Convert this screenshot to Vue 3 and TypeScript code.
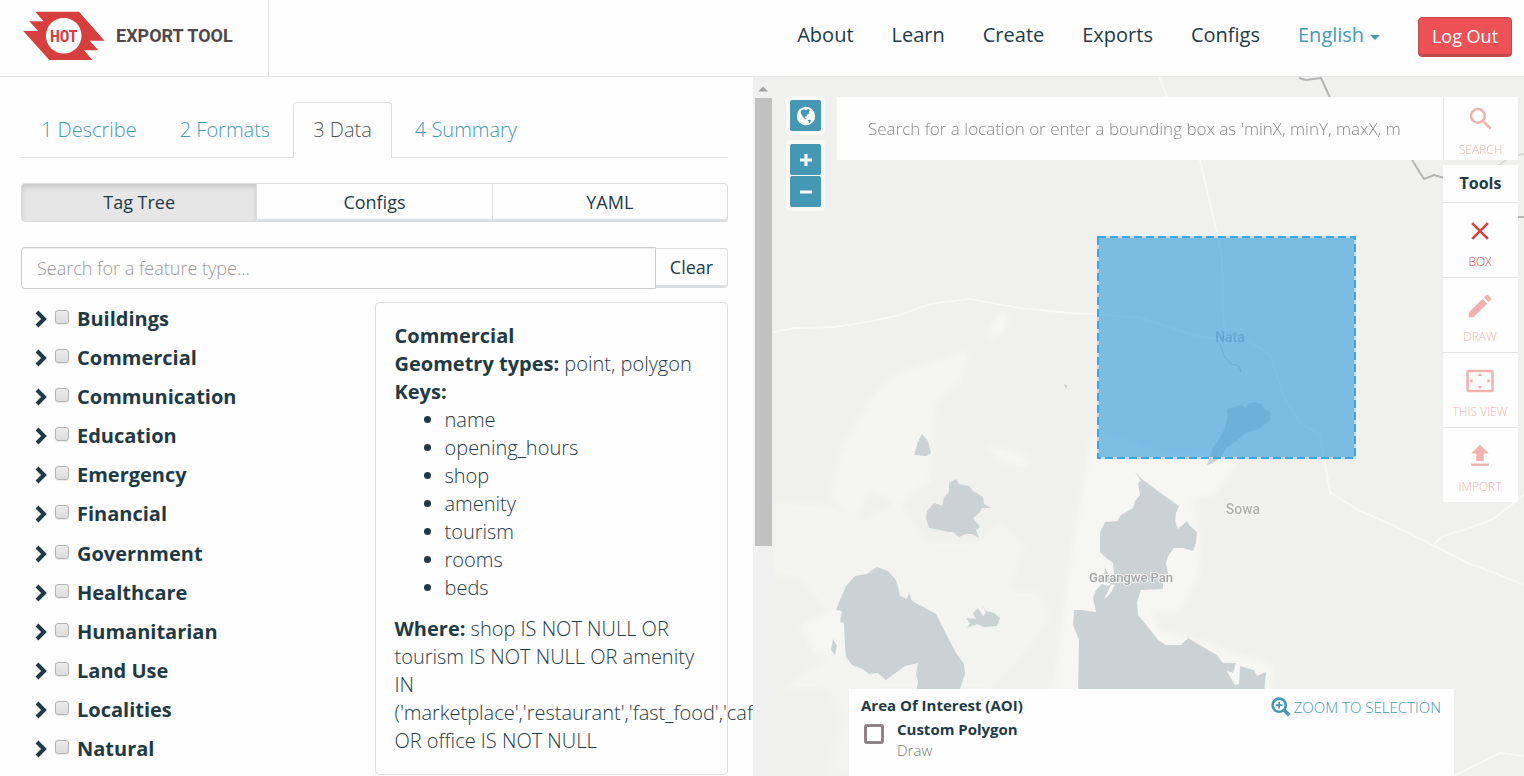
<script setup lang="ts">
import { ref } from 'vue'

const navLinks = ['About', 'Learn', 'Create', 'Exports', 'Configs']
const steps = ['1 Describe', '2 Formats', '3 Data', '4 Summary']
const activeStep = ref('3 Data')
const modes = ['Tag Tree', 'Configs', 'YAML']
const activeMode = ref('Tag Tree')
const featureQuery = ref('')
const locationQuery = ref('')

const categories = ref(
  [
    'Buildings', 'Commercial', 'Communication', 'Education', 'Emergency', 'Financial',
    'Government', 'Healthcare', 'Humanitarian', 'Land Use', 'Localities', 'Natural',
  ].map((name) => ({ name, checked: false })),
)
const keys = ['name', 'opening_hours', 'shop', 'amenity', 'tourism', 'rooms', 'beds']

interface Tool {
  label: string
  path: string
  active: boolean
}
const tools: Tool[] = [
  { label: 'BOX', active: true, path: 'M19 6.4 17.6 5 12 10.6 6.4 5 5 6.4 10.6 12 5 17.6 6.4 19 12 13.4 17.6 19 19 17.6 13.4 12z' },
  { label: 'DRAW', active: false, path: 'M3 17.25V21h3.75L17.81 9.94l-3.75-3.75L3 17.25zM20.71 7.04a1 1 0 0 0 0-1.41l-2.34-2.34a1 1 0 0 0-1.41 0l-1.83 1.83 3.75 3.75 1.83-1.83z' },
  { label: 'THIS VIEW', active: false, path: 'M12 5.5 10 8h4l-2-2.5zM18 10v4l2.5-2L18 10zM6 10l-2.5 2L6 14v-4zM14 16h-4l2 2.5 2-2.5zM21 3H3a2 2 0 0 0-2 2v14a2 2 0 0 0 2 2h18a2 2 0 0 0 2-2V5a2 2 0 0 0-2-2zm0 16H3V5h18v14z' },
  { label: 'IMPORT', active: false, path: 'M9 16h6v-6h4l-7-7-7 7h4v6zm-4 2h14v2H5v-2z' },
]
</script>

<template>
  <div class="page">
    <header class="header">
      <a class="brand" href="#">
        <svg class="logo" viewBox="23 11 82 50" aria-hidden="true">
          <path fill="#d73f3f" d="M35.3 11.7H79L104.5 40.7H89.7L98.3 50.3H84L92.3 60H49.3L23.3 31H38L29.3 21.3H43.5z" />
          <circle cx="63.7" cy="35.7" r="17.8" fill="#fff" />
          <text x="63.7" y="42" text-anchor="middle" class="logo-text">HOT</text>
        </svg>
        <span class="brand-name">EXPORT TOOL</span>
      </a>
      <nav class="nav">
        <a v-for="link in navLinks" :key="link" href="#">{{ link }}</a>
        <span class="language">
          <select aria-label="Language"><option>English</option></select>
          <i class="caret"></i>
        </span>
        <button class="logout" type="button">Log Out</button>
      </nav>
    </header>

    <main class="body">
      <section class="pane">
        <div class="content">
          <nav class="tabs">
            <a
              v-for="step in steps"
              :key="step"
              href="#"
              :class="{ active: step === activeStep }"
              @click.prevent="activeStep = step"
            >{{ step }}</a>
          </nav>

          <div class="modes">
            <button
              v-for="mode in modes"
              :key="mode"
              type="button"
              :class="{ active: mode === activeMode }"
              @click="activeMode = mode"
            >{{ mode }}</button>
          </div>

          <div class="feature-search">
            <input v-model="featureQuery" type="text" aria-label="Feature type" placeholder="Search for a feature type..." />
            <button type="button" @click="featureQuery = ''">Clear</button>
          </div>

          <div class="columns">
            <ul class="tree">
              <li v-for="category in categories" :key="category.name">
                <svg class="chevron" viewBox="0 0 12 18" aria-hidden="true">
                  <path d="M2 2 9 9 2 16" fill="none" stroke="#1e3a47" stroke-width="4" />
                </svg>
                <label>
                  <input v-model="category.checked" type="checkbox" />
                  <span>{{ category.name }}</span>
                </label>
              </li>
            </ul>
            <article class="card">
              <strong>Commercial</strong><br />
              <strong>Geometry types:</strong> point, polygon<br />
              <strong>Keys:</strong>
              <ul>
                <li v-for="key in keys" :key="key">{{ key }}</li>
              </ul>
              <strong>Where:</strong> shop IS NOT NULL OR tourism IS NOT NULL OR amenity IN
              ('marketplace','restaurant','fast_food','cafe') OR office IS NOT NULL
            </article>
          </div>
        </div>
        <div class="scrollbar" aria-hidden="true">
          <svg viewBox="0 0 20 21"><path d="M5 14.5 10 9.5 15 14.5z" fill="#a0a0a0" /></svg>
          <div class="thumb"></div>
        </div>
      </section>

      <section class="map">
        <svg class="canvas" viewBox="773 77 751 699" preserveAspectRatio="xMidYMid slice" role="img" aria-label="Map">
          <defs>
            <filter id="soften" x="-10%" y="-10%" width="120%" height="120%">
              <feGaussianBlur stdDeviation="3" />
            </filter>
          </defs>
          <rect x="773" y="77" width="751" height="699" fill="#f0f0ee" />
          <g fill="#f6f6f4" filter="url(#soften)">
            <path d="M1088 460 1090 440 1100 430 1170 455 1230 445 1238 462 1215 495 1192 500 1200 540 1198 575 1180 612 1150 610 1160 630 1195 638 1225 650 1275 665 1265 700H1050L1058 660 1070 560z" />
            <path d="M968 350 960 385 935 402 930 480 900 505 870 490 855 520 830 495 845 440 880 385 905 370 940 360z" opacity=".8" />
            <path d="M773 500 830 505 860 520 900 500 925 540 975 540 1000 520 1025 545 1010 590 1040 590 1050 620 1020 660 990 690H780L850 640 820 605 800 580 773 575z" opacity=".55" />
            <path d="M995 318 1008 312 1005 332 985 340z" />
            <path d="M985 445 1025 455 1030 468 1000 462z" />
            <path d="M800 625 845 605 848 650 815 655z" />
            <path d="M820 670 870 685 870 776H825L840 720z" opacity=".5" />
          </g>
          <g fill="none" stroke="#f8f8f7" stroke-width="2">
            <path d="M773 332 795 328 835 327 873 321 900 315 930 304 970 299 1020 308 1070 313 1098 314 1140 318 1200 337 1250 342 1270 355 1285 400 1300 422 1320 435 1330 492 1360 511 1395 526 1433 545 1470 564 1495 573 1524 585" />
            <path d="M1159 77 1169 100M1200 160 1218 237 1222 260 1224 337M1433 545 1443 536 1470 528 1493 519 1524 495M1454 776 1500 753 1524 756" />
          </g>
          <g fill="none" stroke="#b4b5b5" stroke-width="2" stroke-linejoin="round">
            <path d="M1299 78 1306 80 1321 78 1326 89 1331 100" />
            <path d="M1412 160 1424 179 1434 175 1444 178" />
            <path d="M1516 217H1524" />
            <path d="M1496 167 1512 156 1524 154" stroke="#d6d7d6" />
          </g>
          <g fill="#cad2d3">
            <path d="M1135 472 1143 480 1154 488 1166 497 1179 506 1176 513 1175 521 1178 529 1187 521 1190 526 1197 532 1196 543 1193 551 1183 548 1174 548 1168 556 1166 563 1168 573 1163 582 1163 589 1141 590 1137 602 1138 615 1148 627 1158 640 1166 645 1181 645 1188 638 1203 647 1217 655 1223 663 1236 663 1233 673 1226 670 1235 685 1239 684 1240 666 1247 668 1254 670 1257 676 1266 672 1264 695H1078L1079 640 1073 625 1074 610 1082 610 1096 612 1093 598 1096 590 1102 584 1108 586 1112 583 1104 599 1110 594 1115 585 1104 582 1105 567 1109 576 1114 575 1113 563 1106 558 1100 552 1100 533 1105 522 1117 521 1121 515 1133 508 1135 501 1140 495 1138 483 1141 481z" />
            <path d="M956 479 959 484 969 486 973 491 983 497 984 504 991 508 982 508 979 513 973 518 980 527 976 530 979 538 972 534 966 534 959 537 953 532 949 532 940 530 929 528 926 518 927 511 934 503 942 506 944 497 949 492 949 483z" />
            <path d="M877 567 888 571 896 580 898 587 900 596 907 599 909 593 912 601 925 608 936 614 945 632 956 653 964 664 965 674 959 692H916L918 682 916 674 918 663 905 666 886 680 878 673 869 674 863 669 852 665 846 657 845 647 844 623 840 622 842 611 836 610 840 600 846 586 855 576 867 574z" />
            <path d="M922 434 928 441 931 453 926 456 914 455 917 444z" />
            <path d="M982 605 986 611 994 613 1000 618 997 626 984 627 977 624 967 628 970 623 966 618 976 619 973 613 978 608 983 616 986 613z" />
            <path d="M1064 384 1067 385 1066 390z" />
            <path d="M833 639 837 646 835 655 831 650z" />
            <path d="M1255 402 1261 404 1265 409 1270 412 1270 420 1259 429 1246 432 1238 440 1226 448 1222 456 1217 460 1213 463 1207 465 1211 453 1213 447 1219 439 1224 430 1228 416 1227 409 1234 407 1241 405 1246 407 1249 403z" />
            <path d="M1220 344 1224 356 1231 364 1239 366 1241 372" fill="none" stroke="#bcc6c8" stroke-width="1" />
          </g>
          <g class="places">
            <text x="1230" y="342" text-anchor="middle">Nata</text>
            <text x="1243" y="514" text-anchor="middle">Sowa</text>
            <text x="1131" y="582" text-anchor="middle" class="water">Garangwe Pan</text>
          </g>
          <rect x="1098" y="237" width="257" height="221" fill="#3b9fdc" fill-opacity=".65" stroke="#c4dcea" stroke-width="2" />
          <rect x="1098" y="237" width="257" height="221" fill="none" stroke="#43a3dc" stroke-width="2" stroke-dasharray="8 4" />
        </svg>

        <div class="controls">
          <div class="control-group">
            <button type="button" aria-label="Whole world">
              <svg viewBox="0 0 20 20">
                <circle cx="10" cy="10" r="9.2" fill="#fff" />
                <path fill="#4498b4" d="M5 4.5 8 3.2 10 4 12.5 2.8 14 4.5 12.8 6 13.6 7.4 11.8 8 10.8 10 9 10.6 8.8 12 10.6 12.4 9.8 13.4 7.4 11.8 5.4 8.6 4.6 6.4z" />
                <path fill="#4498b4" d="M11.2 14.4 13.6 13.4 15 14.4 14.2 16.6 12.6 17.6 12.8 15.6z" />
              </svg>
            </button>
          </div>
          <div class="control-group">
            <button type="button" aria-label="Zoom in">
              <svg viewBox="0 0 20 20"><path d="M4 10H16M10 4V16" stroke="#fff" stroke-width="3" /></svg>
            </button>
            <button type="button" aria-label="Zoom out">
              <svg viewBox="0 0 20 20"><path d="M4 10H16" stroke="#fff" stroke-width="3" /></svg>
            </button>
          </div>
        </div>

        <form class="location" @submit.prevent>
          <div class="location-field">
            <input
              v-model="locationQuery"
              type="text"
              aria-label="Location"
              placeholder="Search for a location or enter a bounding box as 'minX, minY, maxX, maxY'"
            />
          </div>
          <button type="submit" class="tool search">
            <svg viewBox="0 0 24 24">
              <path d="M15.5 14h-.79l-.28-.27A6.47 6.47 0 0 0 16 9.5 6.5 6.5 0 1 0 9.5 16c1.61 0 3.09-.59 4.23-1.57l.27.28v.79l5 4.99L20.49 19l-4.99-5zm-6 0a4.5 4.5 0 1 1 0-9 4.5 4.5 0 0 1 0 9z" />
            </svg>
            <span>SEARCH</span>
          </button>
        </form>

        <aside class="tools">
          <h2>Tools</h2>
          <button v-for="tool in tools" :key="tool.label" type="button" class="tool" :class="{ active: tool.active }">
            <svg viewBox="0 0 24 24"><path :d="tool.path" /></svg>
            <span>{{ tool.label }}</span>
          </button>
        </aside>

        <div class="aoi">
          <div class="aoi-info">
            <h2>Area Of Interest (AOI)</h2>
            <div class="aoi-item">
              <input id="aoi-polygon" type="checkbox" />
              <label for="aoi-polygon"><strong>Custom Polygon</strong><span>Draw</span></label>
            </div>
          </div>
          <a class="zoom-link" href="#">
            <svg viewBox="0 0 20 20" aria-hidden="true">
              <circle cx="8.2" cy="8.2" r="6.6" fill="none" stroke="#4498b4" stroke-width="2.6" />
              <path d="M13 13 18.2 18.2" stroke="#4498b4" stroke-width="3.6" />
              <path d="M4.8 8.2H11.6M8.2 4.8V11.6" stroke="#4498b4" stroke-width="1.8" />
            </svg>
            <span>ZOOM TO SELECTION</span>
          </a>
        </div>
      </section>
    </main>
  </div>
</template>

<style>
body {
  overflow: hidden;
}
</style>

<style scoped>
* {
  box-sizing: border-box;
}
.page {
  display: flex;
  flex-direction: column;
  height: 100vh;
  background: #fefefe;
  color: #1e3a47;
  font: 300 20px/28px "Open Sans", sans-serif;
}
button,
input,
select {
  margin: 0;
  font-family: inherit;
  color: inherit;
}
button {
  padding: 0;
  cursor: pointer;
}
a {
  text-decoration: none;
}
ul,
h2 {
  margin: 0;
  padding: 0;
}
svg {
  display: block;
}

.header {
  display: flex;
  justify-content: space-between;
  flex: none;
  height: 77px;
  border-bottom: 1px solid #e3e3e3;
}
.brand {
  display: flex;
  align-items: center;
  gap: 11px;
  width: 269px;
  padding: 0 0 4px 23px;
  border-right: 1px solid #e3e3e3;
  color: #50484b;
}
.logo {
  width: 82px;
  height: 50px;
}
.logo-text {
  fill: #d73f3f;
  font: 700 16px "Liberation Sans Narrow", "Roboto Condensed", "Roboto", sans-serif;
}
.brand-name {
  font: 700 18px/24px "Roboto", sans-serif;
}
.nav {
  display: flex;
  align-items: flex-start;
  gap: 38px;
  padding-right: 12px;
  font-weight: 400;
}
.nav a {
  padding-top: 21px;
  color: #1e3a47;
}
.language {
  display: flex;
  align-items: center;
  gap: 5px;
  padding-top: 21px;
  color: #4498b4;
}
.language select {
  appearance: none;
  height: 28px;
  padding: 0;
  border: 0;
  background: none;
  font-size: 20px;
  line-height: 28px;
}
.caret {
  margin-top: 4px;
  border: 5px solid transparent;
  border-top-color: #4498b4;
  border-bottom: 0;
}
.logout {
  width: 94px;
  height: 40px;
  margin-top: 17px;
  padding-bottom: 2px;
  border: 1px solid #c5464a;
  border-radius: 4px;
  background: #ec5155;
  box-shadow: inset 0 -2px 0 #b94a4c;
  color: #fff;
  font-size: 18px;
}

.body {
  display: grid;
  grid-template-columns: 773fr 751fr;
  flex: 1;
  min-height: 0;
}
.pane {
  display: flex;
  min-width: 0;
  min-height: 0;
  overflow: hidden;
}
.content {
  flex: 1;
  min-width: 0;
  padding: 25px 25px 0 21px;
  overflow: hidden;
}
.scrollbar {
  flex: none;
  width: 20px;
  background: #f0f0f0;
}
.scrollbar svg {
  width: 20px;
  height: 21px;
}
.thumb {
  height: 66%;
  max-height: 448px;
  margin: 0 1px 0 2px;
  background: #c1c1c1;
}

.tabs {
  display: flex;
  gap: 3px;
  border-bottom: 1px solid #ddd;
}
.tabs a {
  height: 55px;
  padding: 13px 19px 0;
  border: 1px solid transparent;
  color: #4498b4;
}
.tabs a.active {
  height: 56px;
  margin-bottom: -1px;
  border-color: #ddd;
  border-bottom: 0;
  border-radius: 4px 4px 0 0;
  background: #fefefe;
  color: #555;
}
.modes {
  display: flex;
  margin-top: 25px;
}
.modes button {
  flex: 1;
  height: 39px;
  padding-bottom: 2px;
  border: 1px solid #ddd;
  border-left-width: 0;
  background: #fefefe;
  box-shadow: inset 0 -2px 0 #dbe1e3;
  font-size: 18px;
  font-weight: 400;
}
.modes button:first-child {
  border-left-width: 1px;
  border-radius: 4px 0 0 4px;
}
.modes button:last-child {
  border-radius: 0 4px 4px 0;
}
.modes button.active {
  background: #e6e6e6;
  box-shadow: inset 0 3px 5px rgba(0, 0, 0, 0.13);
}
.feature-search {
  display: flex;
  align-items: flex-start;
  margin-top: 25px;
}
.feature-search input {
  flex: 1;
  min-width: 0;
  height: 42px;
  padding: 0 15px;
  border: 1px solid #ccc;
  border-radius: 4px 0 0 4px;
  background: #fefefe;
  box-shadow: inset 0 1px 1px rgba(0, 0, 0, 0.08);
  font-size: 18px;
  font-weight: 300;
}
.feature-search input::placeholder {
  color: #999;
}
.feature-search button {
  width: 72px;
  height: 40px;
  margin-top: 1px;
  padding-bottom: 2px;
  border: 1px solid #ddd;
  border-left: 0;
  border-radius: 0 4px 4px 0;
  background: #fefefe;
  box-shadow: inset 0 -2px 0 #dbe1e3;
  font-size: 18px;
  font-weight: 400;
}

.columns {
  display: grid;
  grid-template-columns: minmax(0, 1fr) minmax(0, 1fr);
  margin-top: 10px;
}
.tree {
  display: grid;
  grid-auto-rows: 1fr;
  padding: 0 0 6px 14px;
  list-style: none;
}
.tree li {
  display: flex;
  align-items: center;
  gap: 8px;
}
.chevron {
  width: 12px;
  height: 18px;
}
.tree label {
  display: flex;
  align-items: center;
  gap: 8px;
  font-weight: 700;
}
.tree input {
  appearance: none;
  width: 14px;
  height: 14px;
  margin-bottom: 4px;
  border: 1px solid #b3b3b3;
  border-radius: 3px;
  background: linear-gradient(#ececec, #dcdcdc);
  box-shadow: 0 1px 1px rgba(0, 0, 0, 0.08);
}
.tree input:checked {
  background: #4498b4;
}
.card {
  margin-top: 3px;
  padding: 19px;
  border: 1px solid #ddd;
  border-radius: 4px;
}
.card strong {
  font-weight: 700;
}
.card ul {
  margin-bottom: 13px;
  padding-left: 50px;
}

.map {
  position: relative;
  min-width: 0;
  overflow: hidden;
  background: #f0f0ee;
}
.canvas {
  position: absolute;
  inset: 0;
  width: 100%;
  height: 100%;
}
.places text {
  fill: #b0b0b0;
  stroke: #f4f4f3;
  stroke-width: 2px;
  paint-order: stroke;
  font: 500 14px "Roboto", sans-serif;
}
.places .water {
  fill: #a4a5a6;
  font-size: 13px;
}
.controls {
  position: absolute;
  top: 19px;
  left: 13px;
  display: grid;
  gap: 5px;
}
.control-group {
  display: grid;
  gap: 1px;
  padding: 4px;
  border-radius: 4px;
  background: rgba(255, 255, 255, 0.5);
}
.control-group button {
  display: grid;
  place-items: center;
  width: 31px;
  height: 31px;
  border: 0;
  border-radius: 2px;
  background: #4498b4;
}
.control-group svg {
  width: 20px;
  height: 20px;
}
.location {
  position: absolute;
  top: 20px;
  right: 6px;
  left: 64px;
  display: flex;
  height: 63px;
  background: #fefefe;
}
.location-field {
  display: flex;
  flex: 1;
  min-width: 0;
  padding: 0 42px 0 31px;
  border-right: 1px solid #e3e3e3;
}
.location-field input {
  flex: 1;
  min-width: 0;
  padding: 0;
  border: 0;
  outline: 0;
  background: none;
  font-size: 17px;
  font-weight: 300;
}
.location-field input::placeholder {
  color: #888;
}
.tool {
  display: flex;
  flex-direction: column;
  align-items: center;
  width: 75px;
  height: 75px;
  padding: 13px 1px 0 0;
  border: 0;
  border-top: 1px solid #e3e3e3;
  background: #fefefe;
  color: #efb2ad;
  font-size: 12px;
  font-weight: 300;
  line-height: 16px;
}
.tool svg {
  width: 30px;
  height: 30px;
  margin-bottom: 8px;
  fill: currentColor;
}
.tool.active {
  color: #d73f3f;
}
.tool.search {
  width: 74px;
  height: 63px;
  padding-top: 7px;
  border: 0;
}
.tools {
  position: absolute;
  top: 88px;
  right: 6px;
  width: 75px;
  background: #fefefe;
}
.tools h2 {
  height: 37px;
  font-size: 16px;
  font-weight: 700;
  line-height: 37px;
  text-align: center;
}
.aoi {
  position: absolute;
  right: 70px;
  bottom: 0;
  left: 76px;
  display: flex;
  justify-content: space-between;
  height: 87px;
  padding: 6px 13px 0 12px;
  background: #fefefe;
  font-size: 15px;
  line-height: 21px;
}
.aoi h2 {
  font-size: 15px;
  font-weight: 700;
}
.aoi-item {
  display: flex;
  gap: 13px;
  padding: 3px 0 0 3px;
}
.aoi-item input {
  appearance: none;
  width: 20px;
  height: 20px;
  margin-top: 5px;
  border: 3px solid #8e8488;
  border-radius: 3px;
}
.aoi-item input:checked {
  background: #8e8488;
}
.aoi-item label {
  display: grid;
}
.aoi-item strong {
  font-weight: 700;
}
.aoi-item span {
  color: #777;
}
.zoom-link {
  display: flex;
  align-items: center;
  gap: 3px;
  height: 24px;
  color: #4498b4;
}
.zoom-link svg {
  width: 20px;
  height: 20px;
}
</style>
